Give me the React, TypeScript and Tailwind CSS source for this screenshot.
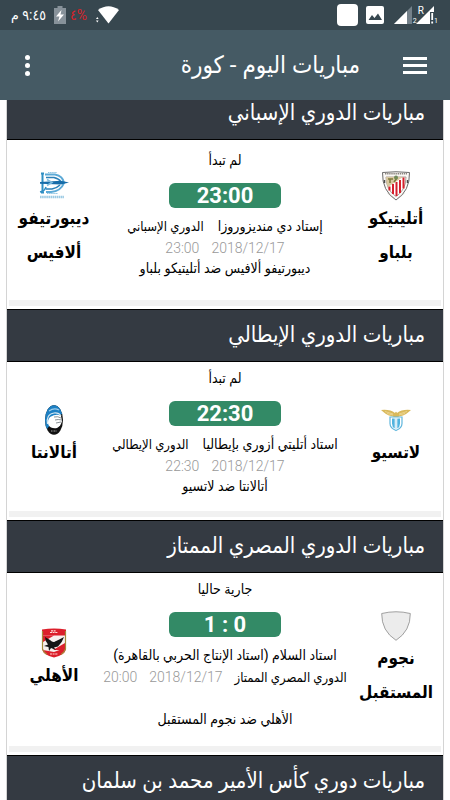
import type { ReactNode } from "react"

type Team = { name: string; logo: ReactNode }

type Match = {
  id: string
  status: string
  score: string
  stadium: string
  league: string
  date: string
  time: string
  // long stadium names push the league down to the date line
  wrapLeague?: boolean
  summary: string
  home: Team
  away: Team
  spacing: string
}

const AthleticLogo = () => (
  <svg viewBox="0 0 30 30" className="h-[30px] w-[30px]">
    <path d="M1.5 1.5Q15 0 28.5 1.5Q29 20 15 29Q1 20 1.5 1.5Z" fill="#fbf9f6" stroke="#6b6b6b" strokeWidth="1" />
    <path d="M4 2.8h22" stroke="#8b8580" strokeWidth="1.6" strokeDasharray="1.4 .7" />
    <path d="M5 6h20q0 13-10 19.500Q5 19 5 6Z" fill="#fff" stroke="#8a7a70" strokeWidth=".7" />
    <path d="M5 6h17L7 16Q5 12 5 6Z" fill="#d9c8a0" />
    <path d="M9 12V8M7 8h5M13 11l3-4" stroke="#7d7a3b" strokeWidth="1.500" />
    <circle cx="15" cy="6.500" r="2" fill="#6f8a58" />
    <path d="M8.500 15.500v4M12 13v10M15.500 11v14M19 9v13M22.500 6.500v11" stroke="#d5202c" strokeWidth="2" />
    <path d="M3.500 9v3M26.500 9v3" stroke="#4c4c4c" strokeWidth="1.500" />
    <path d="M7 22q3 4 7 5.500M23 22q-3 4-7 5.500" stroke="#aaa49c" strokeWidth="1" fill="none" strokeDasharray="1.200 .6" />
  </svg>
)

const AlavesLogo = () => (
  <svg viewBox="0 0 30 30" className="h-[30px] w-[30px]" fill="none">
    <path d="M2 2.500h3M2 21.500h3M3.500 2v20" stroke="#2f8fc4" strokeWidth="2" />
    <path d="M6 3.500h10Q24 5 25 12Q22 20 12 21H7" stroke="#5ba9d6" strokeWidth="2" />
    <path d="M7 6.500h8Q20 8 21.500 10M7 18h6q5-1 8-4" stroke="#2a80b8" strokeWidth="1.500" />
    <path d="M1 11L22 9.800L30 11.500L22 13.400L1 12.800Z" fill="#176ca9" />
    <path d="M8 8.500l5 3-5 3" stroke="#7fbde0" strokeWidth="1.500" />
    <path d="M1 21Q6 20 7 16" stroke="#2f8fc4" strokeWidth="1.500" />
    <path d="M9 1.500h9M8 22.500h11" stroke="#8cc3e2" strokeWidth="1" strokeDasharray="1.500 .6" />
    <path d="M1 26h24" stroke="#9ccbe4" strokeWidth="2.500" strokeDasharray="1.600 .5" />
  </svg>
)

const LazioLogo = () => (
  <svg viewBox="0 0 30 30" className="h-[30px] w-[30px]">
    <path d="M0 5Q9 4 14 8Q15 5.500 16 8Q21 4 30 5L27 7.500L25 9L22 10.500L18 11.500L16 13H14L12 11.500L8 10.500L5 9L3 7.500Z" fill="#d9b95c" />
    <path d="M4 6.500l8 2.500M6 8.500l6 1.500M26 6.500l-8 2.500M24 8.500l-6 1.500" stroke="#f0dda0" strokeWidth=".7" />
    <path d="M9 12h12v6.500q0 4.500-6 7q-6-2.500-6-7Z" fill="#fff" stroke="#5fb6dc" strokeWidth="1.200" />
    <path d="M11 13.500h2.700v10Q11 22 11 18.500ZM16.300 13.500H19v5q0 3.500-2.700 5Z" fill="#4fb3df" />
    <path d="M15 13v11" stroke="#c7e6f4" strokeWidth="1.500" />
  </svg>
)

const AtalantaLogo = () => (
  <svg viewBox="0 0 30 30" className="h-[30px] w-[30px]">
    <clipPath id="atalanta">
      <ellipse cx="15" cy="15" rx="9" ry="14.700" />
    </clipPath>
    <g clipPath="url(#atalanta)">
      <rect width="30" height="30" fill="#111" />
      <path d="M5 0h20v8L17 12L8 24H5Z" fill="#1c80c4" />
      <path d="M10 6Q15 2.500 20 5" stroke="#9fcdea" strokeWidth="1.200" fill="none" />
      <path d="M8.500 19Q7 9 15 8Q20 7.500 22 11" stroke="#d7e8f2" strokeWidth="1.200" fill="none" />
      <path d="M11 12Q18 8 22 11L23 16Q22 21 18 23Q12 24 9.500 20Q8 15 11 12Z" fill="#fff" />
      <path d="M15 12q4-1 7 1M16 15q3-1 7 0M17 18l5-1" stroke="#7d878c" strokeWidth=".9" fill="none" />
      <path d="M12 26h6" stroke="#a5a5a5" strokeWidth="1" strokeDasharray="1 .5" />
    </g>
  </svg>
)

const EmptyLogo = () => (
  <svg viewBox="0 0 30 30" className="h-[30px] w-[30px]">
    <path d="M.7 2.500Q15-1 29.300 2.500Q29.500 20 15 29.300Q.5 20 .7 2.500Z" fill="#ececec" stroke="#8a8a8a" strokeWidth=".8" />
  </svg>
)

const AhlyLogo = () => (
  <svg viewBox="0 0 30 30" className="h-[30px] w-[30px]">
    <path d="M3 1.500Q15-.5 27 1.500V21Q26 27 15 29.500Q4 27 3 21Z" fill="#dc1f2b" />
    <path d="M4 7.500H26V20L15 24L4 22Z" fill="#f7f0ee" />
    <path d="M4 7.500h11L4 14ZM26 15v7h-12Z" fill="#dc1f2b" />
    <path d="M3.500 3v18Q5 25 8 26.500M26.500 3v18Q25 25 22 26.500" stroke="#a58a3c" strokeWidth="1.200" fill="none" />
    <path d="M6 9L11 12Q14 15 16 13.500Q19 12 25 9Q23 15 19 18.500L15 19.500L17 22L12 20L10 23L9.500 19L5 18L9 16.500Q6 13 6 9Z" fill="#151515" />
    <path d="M11 4.500h8M12 2.800h5M11 26h8" stroke="#ffd9d6" strokeWidth="1.200" strokeDasharray="2 .6" />
  </svg>
)

const sections: { title: string; matches: Match[] }[] = [
  {
    title: "مباريات الدوري الإسباني",
    matches: [
      {
        id: "alaves-athletic",
        status: "لم تبدأ",
        score: "23:00",
        stadium: "إستاد دي منديزوروزا",
        league: "الدوري الإسباني",
        date: "2018/12/17",
        time: "23:00",
        summary: "ديبورتيفو ألافيس ضد أتليتيكو بلباو",
        home: { name: "أتليتيكو بلباو", logo: <AthleticLogo /> },
        away: { name: "ديبورتيفو ألافيس", logo: <AlavesLogo /> },
        spacing: "pt-[9px] pb-[23px]",
      },
    ],
  },
  {
    title: "مباريات الدوري الإيطالي",
    matches: [
      {
        id: "atalanta-lazio",
        status: "لم تبدأ",
        score: "22:30",
        stadium: "استاد أتليتي أزوري بإيطاليا",
        league: "الدوري الإيطالي",
        date: "2018/12/17",
        time: "22:30",
        summary: "أتالانتا ضد لاتسيو",
        home: { name: "لاتسيو", logo: <LazioLogo /> },
        away: { name: "أتالانتا", logo: <AtalantaLogo /> },
        spacing: "pt-[5px] pb-4",
      },
    ],
  },
  {
    title: "مباريات الدوري المصري الممتاز",
    matches: [
      {
        id: "ahly-nogoom",
        status: "جارية حاليا",
        score: "1 : 0",
        stadium: "استاد السلام (استاد الإنتاج الحربي بالقاهرة)",
        league: "الدوري المصري الممتاز",
        date: "2018/12/17",
        time: "20:00",
        wrapLeague: true,
        summary: "الأهلي ضد نجوم المستقبل",
        home: { name: "نجوم المستقبل", logo: <EmptyLogo /> },
        away: { name: "الأهلي", logo: <AhlyLogo /> },
        spacing: "pt-[5px] pb-[18px]",
      },
    ],
  },
  { title: "مباريات دوري كأس الأمير محمد بن سلمان", matches: [] },
]

function StatusBar() {
  return (
    <div dir="ltr" className="flex h-[30px] shrink-0 items-center justify-between bg-[#37474f] pr-3 pl-2.5 text-white">
      <div className="flex items-center">
        <span dir="rtl" className="w-9 text-[14px] whitespace-nowrap">٩:٤٥ م</span>
        <svg viewBox="0 0 12 18" className="ml-2 h-[18px] w-3">
          <path d="M3.500 0h5v2H12v16H0V2h3.500Z" fill="#87929a" />
          <path d="M7.500 4L2 10.500h3.500L4 15.500l6-7H6.500Z" fill="#fff" />
        </svg>
        <span className="ml-1 w-5 text-[14px] whitespace-nowrap text-[#d8232a]">٤%</span>
        <svg viewBox="0 0 24 18" className="ml-1.5 h-[18px] w-6" fill="#fff">
          <path d="M2 4Q12.500-3.500 23 4L12.500 17.500Z" />
          <path d="M0 13l1.300-2L2.600 13ZM0 14.500h2.600L1.300 16.500Z" />
        </svg>
      </div>
      <div className="flex items-center">
        <span className="h-[22px] w-[21px] rounded bg-white" />
        <svg viewBox="0 0 18 18" className="ml-2 h-[18px] w-[18px]">
          <rect width="18" height="18" rx="2" fill="#fff" />
          <path d="M2.500 14L6 9l2.500 3L12 7.500l4 6.500Z" fill="#37474f" />
        </svg>
        <svg viewBox="0 0 18 18" className="ml-2.5 h-[18px] w-[18px]">
          <path d="M18 0v18H0Z" fill="#74818a" />
          <path d="M13 5v13H0Z" fill="#fff" />
        </svg>
        <span className="mt-3 w-1.5 text-center text-[7px] leading-none">2</span>
        <span className="flex">
          <span className="-mr-1 text-[10px] leading-none">R</span>
          <svg viewBox="0 0 18 18" className="-ml-1 h-[18px] w-[18px]">
            <path d="M18 0v6h-4v12H0Z" fill="#fff" />
            <path d="M15.300 7h1.800v7h-1.800ZM15.300 15.500h1.800v2h-1.800Z" fill="#fff" />
          </svg>
        </span>
        <span className="mt-3 w-1 text-center text-[7px] leading-none">1</span>
      </div>
    </div>
  )
}

function AppBar() {
  return (
    <header className="flex h-[70px] shrink-0 items-center bg-[#455a64] px-[23px] text-white">
      <button type="button" aria-label="القائمة" className="flex w-6 flex-col gap-1">
        <span className="h-[3px] w-full bg-white" />
        <span className="h-[3px] w-full bg-white" />
        <span className="h-[3px] w-full bg-white" />
      </button>
      <h1 className="mr-[43px] flex-1 text-[24px] leading-8 whitespace-nowrap">مباريات اليوم - كورة</h1>
      <button type="button" aria-label="المزيد" className="flex w-2 flex-col items-center gap-[3px]">
        <span className="h-[5px] w-[5px] rounded-full bg-white" />
        <span className="h-[5px] w-[5px] rounded-full bg-white" />
        <span className="h-[5px] w-[5px] rounded-full bg-white" />
      </button>
    </header>
  )
}

function TeamBlock({ team }: { team: Team }) {
  return (
    <div className="flex w-[90px] shrink-0 flex-col items-center">
      {team.logo}
      <p className="w-[74px] text-center text-[17px] leading-[34px] font-bold">{team.name}</p>
    </div>
  )
}

function MatchRow({ match }: { match: Match }) {
  return (
    <article className="px-0.5 pb-[3px]">
      <div className="flex items-center">
        <TeamBlock team={match.home} />
        <div
          className={`flex min-w-0 flex-1 flex-col items-center text-[14px] leading-[22px] whitespace-nowrap ${match.spacing}`}
        >
          <p>{match.status}</p>
          <p
            dir="ltr"
            className="mt-3 mb-[7px] h-[25px] w-[112px] rounded-md bg-[#338a66] text-center text-[22px] leading-[25px] font-bold text-white"
          >
            {match.score}
          </p>
          <p className="flex h-[22px] items-baseline gap-3.5">
            <span>{match.stadium}</span>
            {!match.wrapLeague && <span className="text-[13px]">{match.league}</span>}
          </p>
          <p className="flex h-[22px] items-baseline gap-3">
            {match.wrapLeague && <span className="text-[13px]">{match.league}</span>}
            <span className="font-light text-[#999]">{match.date}</span>
            <span className="font-light text-[#999]">{match.time}</span>
          </p>
          <p className={match.wrapLeague ? "mt-[22px] leading-[18px]" : "leading-[18px]"}>{match.summary}</p>
        </div>
        <TeamBlock team={match.away} />
      </div>
      <div className="h-1.5 bg-[#f1f1f1]" />
    </article>
  )
}

export default function App() {
  return (
    <div
      dir="rtl"
      className="flex h-screen flex-col overflow-hidden bg-white font-[Roboto,'DejaVu_Sans_Condensed','DejaVu_Sans',sans-serif] text-black"
    >
      <div className="relative z-10">
        <StatusBar />
        <AppBar />
      </div>
      <main className="mx-1.5 -mt-[13px] min-h-0 flex-1 overflow-hidden border-x border-[#d4d4d4]">
        {sections.map((section) => (
          <section key={section.title}>
            <h2 className="h-[53px] border-y border-black bg-[#343a42] px-[18px] text-[22px] leading-[50px] whitespace-nowrap text-white">
              {section.title}
            </h2>
            {section.matches.map((match) => (
              <MatchRow key={match.id} match={match} />
            ))}
          </section>
        ))}
      </main>
    </div>
  )
}
